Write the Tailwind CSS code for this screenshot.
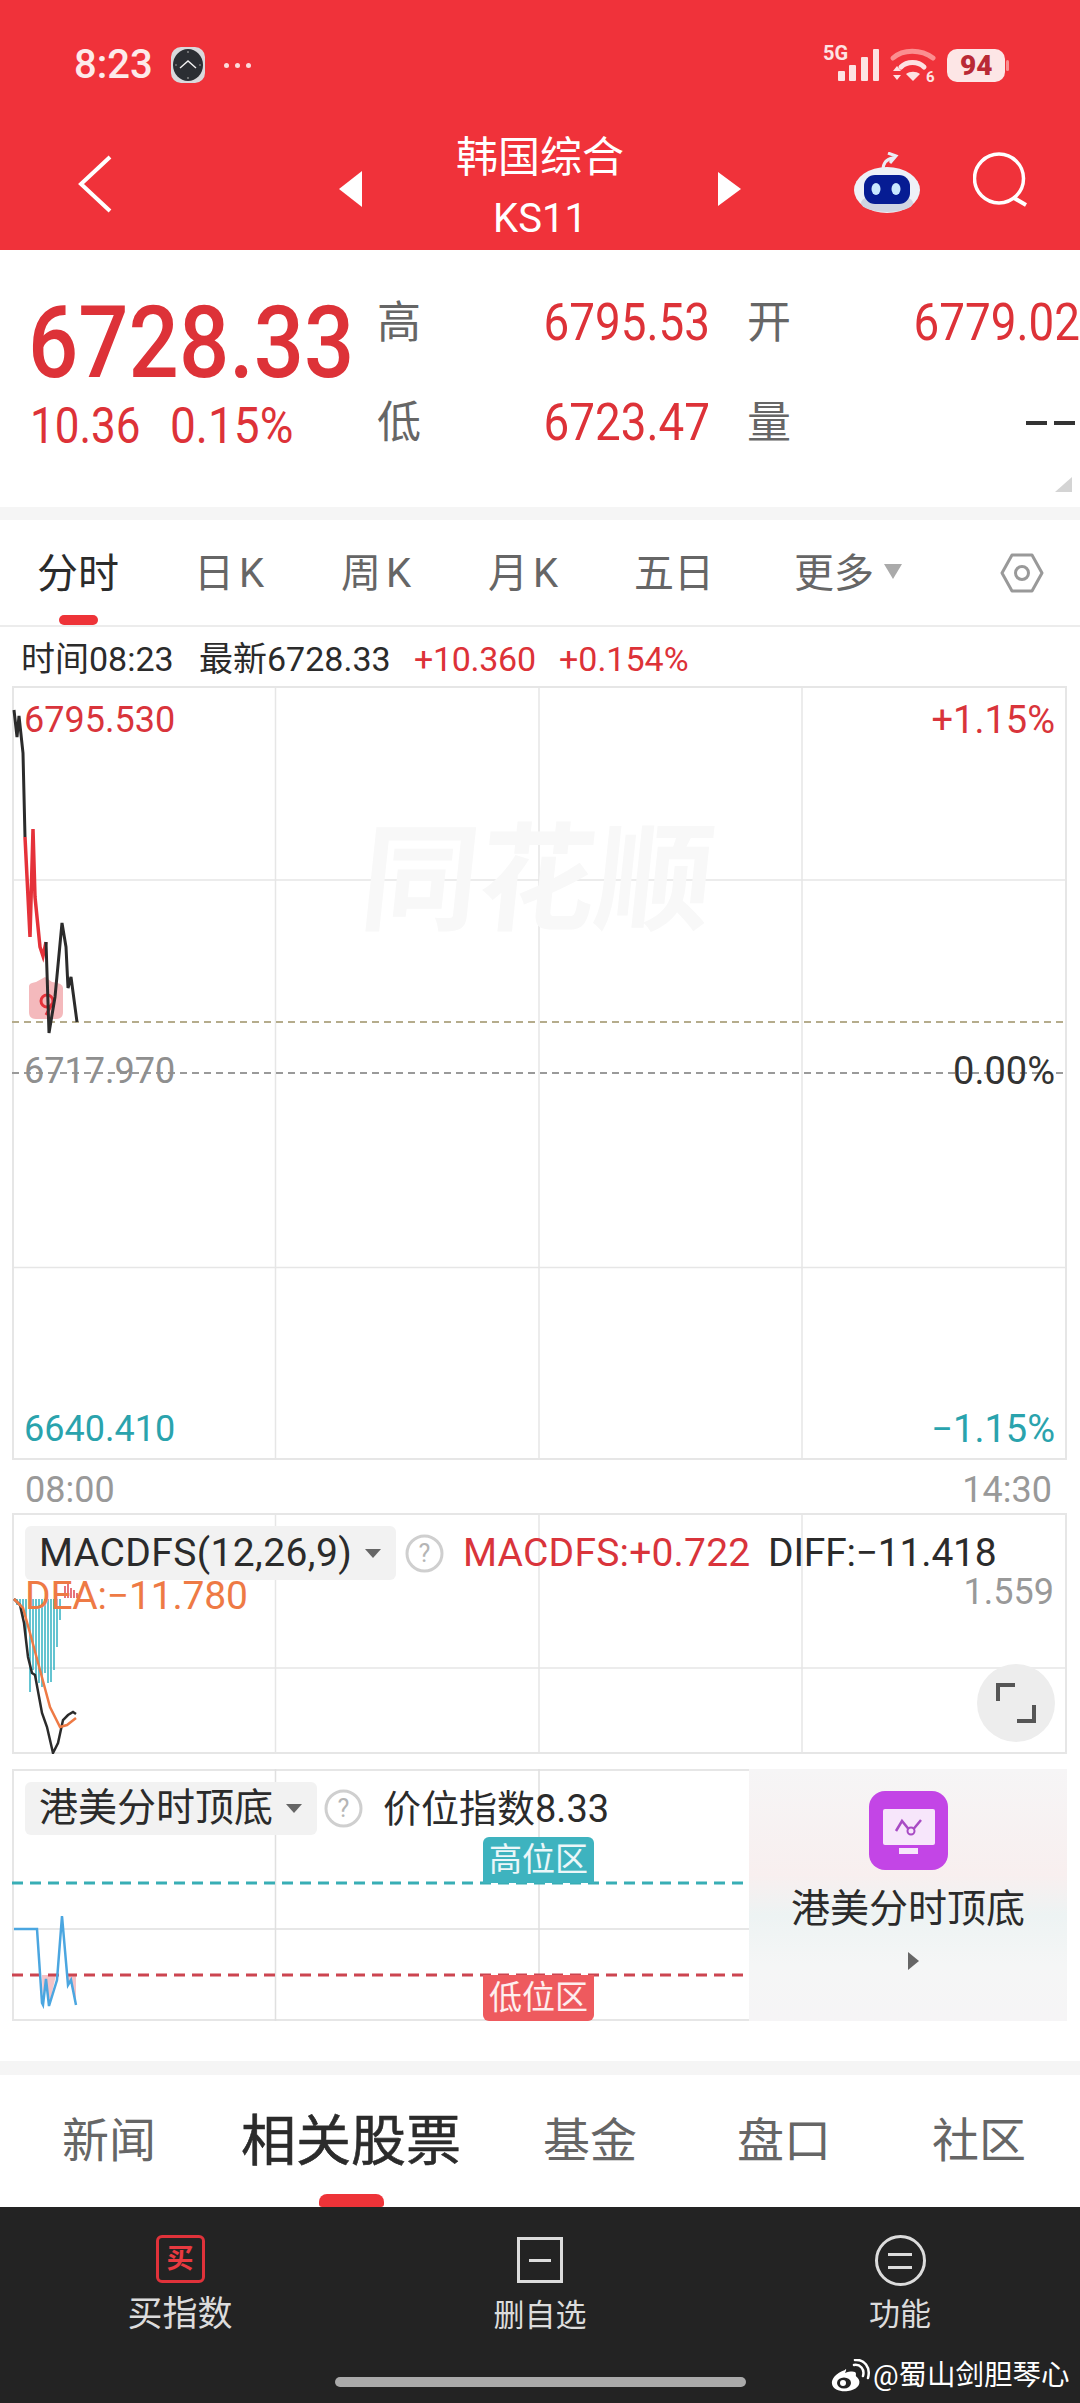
<!DOCTYPE html>
<html lang="zh">
<head>
<meta charset="utf-8">
<script src="https://cdn.jsdelivr.net/npm/@tailwindcss/browser@4"></script>
</head>
<body class="m-0 bg-white">
<div class="w-[1080px] h-[2403px] flex flex-col overflow-hidden bg-white font-['Roboto','Noto_Sans_CJK_SC',sans-serif] text-[#2b2b2b]">

  <!-- header -->
  <header class="h-[250px] shrink-0 bg-[#f0323a] text-white flex flex-col">
    <div class="h-[130px] pt-[40px] pl-[74px] pr-[71px] flex items-start justify-between">
      <div class="flex items-center h-[50px]">
        <span class="text-[40px] leading-none font-medium text-[#fdeaea] w-[97px]">8:23</span>
        <svg class="w-[34px] h-[36px]" viewBox="0 0 34 36">
          <rect x="0" y="0" width="34" height="36" rx="10" fill="#d9d9dc"/>
          <ellipse cx="17" cy="18" rx="15" ry="16" fill="#2b2e33"/>
          <path d="M9 21 L17 14 L25 21" fill="none" stroke="#f2f2f2" stroke-width="1.4"/>
          <path d="M17 4v2M17 30v2M4 18h2M28 18h2" stroke="#9a9a9a" stroke-width="1.2"/>
        </svg>
        <div class="flex gap-[6px] ml-[19px]">
          <span class="w-[5px] h-[5px] rounded-full bg-[#fbdcdc]"></span>
          <span class="w-[5px] h-[5px] rounded-full bg-[#fbdcdc]"></span>
          <span class="w-[5px] h-[5px] rounded-full bg-[#fbdcdc]"></span>
        </div>
      </div>
      <svg class="w-[190px] h-[50px]" viewBox="819 40 190 50">
        <text x="823" y="60" font-family="Roboto" font-weight="700" font-size="20" fill="#fde3e3">5G</text>
        <rect x="838" y="71" width="7" height="10" rx="1" fill="#fde3e3"/>
        <rect x="849" y="65" width="7" height="16" rx="1" fill="#fde3e3"/>
        <rect x="861" y="57" width="7" height="24" rx="1" fill="#fde3e3"/>
        <rect x="873" y="49" width="6" height="32" rx="1" fill="#fde3e3"/>
        <path d="M893 58 C903 49 921 49 933 58" fill="none" stroke="#fb8f90" stroke-width="5" stroke-linecap="round"/>
        <path d="M901 67 C907 61 918 61 924 67" fill="none" stroke="#fde3e3" stroke-width="5" stroke-linecap="round"/>
        <path d="M906 74 C910 71 916 71 920 74 L913 81 Z" fill="#fde3e3"/>
        <path d="M893 71 L897 66 L901 71 Z M893 75 L901 75 L897 80 Z" fill="#fde3e3"/>
        <text x="926" y="82" font-family="Roboto" font-weight="700" font-size="15" fill="#fde3e3">6</text>
        <rect x="947" y="49" width="58" height="33" rx="10" fill="#fde6e6"/>
        <rect x="1006" y="60" width="3" height="11" rx="1.5" fill="#fa8e90"/>
        <text x="960" y="75" font-family="Roboto" font-weight="900" font-size="28" fill="#b92a35">94</text>
      </svg>
    </div>
    <div class="flex-1 grid grid-cols-[1fr_403px_1fr] items-start">
      <div class="pl-[78px] pt-[25px]">
        <svg class="w-[34px] h-[58px]" viewBox="0 0 34 58"><path d="M32 2 L3 29 L32 56" fill="none" stroke="#fff" stroke-width="4"/></svg>
      </div>
      <div class="flex items-center justify-between pt-[3px]">
        <svg class="w-[23px] h-[36px]" viewBox="0 0 23 36"><path d="M23 0 V36 L0 18 Z" fill="#fff"/></svg>
        <div class="flex flex-col items-center">
          <span class="text-[42px] leading-[50px]">韩国综合</span>
          <span class="text-[40px] leading-[50px] mt-[11px]">KS11</span>
        </div>
        <svg class="w-[23px] h-[34px]" viewBox="0 0 23 34"><path d="M0 0 V34 L23 17 Z" fill="#fff"/></svg>
      </div>
      <div class="flex items-start justify-end pr-[52px] pt-[22px] gap-[52px]">
        <svg class="w-[68px] h-[62px]" viewBox="852 154 68 62">
          <path d="M882 172 C882 164 886 161 892 160 M887 155 L895 158 L889 165" fill="none" stroke="#e9edf5" stroke-width="3"/>
          <ellipse cx="886" cy="192" rx="33" ry="23" fill="#eef1f7"/>
          <ellipse cx="886" cy="205" rx="26" ry="9" fill="#cfd5e2"/>
          <rect x="863" y="177" width="46" height="29" rx="11" fill="#061c93"/>
          <ellipse cx="875" cy="191" rx="4.500" ry="6" fill="#c9e8ff"/>
          <ellipse cx="895" cy="191" rx="4.500" ry="6" fill="#c9e8ff"/>
        </svg>
        <svg class="w-[55px] h-[55px]" viewBox="973 158 55 55">
          <circle cx="999" cy="184.500" r="24.500" fill="none" stroke="#fff" stroke-width="3.500"/>
          <path d="M1014 204 L1026 211" stroke="#fff" stroke-width="4"/>
        </svg>
      </div>
    </div>
  </header>

  <!-- quote -->
  <section class="h-[257px] shrink-0 flex relative">
    <div class="w-[377px] pl-[28px] text-[#dd3238]">
      <div class="h-[120px] mt-[43px] text-[100px] leading-[100px] font-medium whitespace-nowrap origin-left scale-x-[.885]">6728.33</div>
      <div class="flex text-[50px] leading-[50px] mt-[-12px] pl-[2px]">
        <span class="w-[140px] origin-left scale-x-[.88]">10.36</span>
        <span class="origin-left scale-x-[.92]">0.15%</span>
      </div>
    </div>
    <div class="grid grid-cols-[44px_289px_37px_44px_289px] grid-rows-[100px_100px] pt-[23px] items-center text-[52px] text-[#dd3238] leading-none whitespace-nowrap">
      <span class="text-[44px] text-[#666]">高</span>
      <span class="text-right origin-right scale-x-[.88]">6795.53</span>
      <span></span>
      <span class="text-[44px] text-[#666]">开</span>
      <span class="text-right origin-right scale-x-[.88]">6779.02</span>
      <span class="text-[44px] text-[#666]">低</span>
      <span class="text-right origin-right scale-x-[.88]">6723.47</span>
      <span></span>
      <span class="text-[44px] text-[#666]">量</span>
      <span class="flex justify-end gap-[7px] pr-[5px]"><i class="w-[21px] h-[4px] bg-[#333]"></i><i class="w-[21px] h-[4px] bg-[#333]"></i></span>
    </div>
    <svg class="absolute right-[8px] bottom-[15px] w-[17px] h-[15px]" viewBox="0 0 17 15"><path d="M17 0 V15 H0 Z" fill="#d4d4d4"/></svg>
  </section>
  <div class="h-[13px] shrink-0 bg-[#f5f5f5]"></div>

  <!-- period tabs -->
  <nav class="h-[107px] shrink-0 border-b-2 border-[#ececec] relative flex items-start pt-[32px] pl-[37px] text-[40px] leading-[44px] text-[#666] whitespace-nowrap">
    <span class="text-[41px] text-[#2b2b2b] w-[157px]">分时</span>
    <span class="w-[147px] tracking-[5px]">日K</span>
    <span class="w-[147px] tracking-[5px]">周K</span>
    <span class="w-[146px] tracking-[5px]">月K</span>
    <span class="w-[160px]">五日</span>
    <span class="w-[90px]">更多</span>
    <svg class="w-[18px] h-[15px] mt-[12px]" viewBox="0 0 18 15"><path d="M0 0 H18 L9 15 Z" fill="#aaa"/></svg>
    <svg class="w-[44px] h-[40px] ml-[98px] mt-[1px]" viewBox="0 0 44 40"><path d="M12 2 H32 L42 20 L32 38 H12 L2 20 Z" fill="none" stroke="#999" stroke-width="3" stroke-linejoin="round"/><circle cx="22" cy="20" r="6.500" fill="none" stroke="#999" stroke-width="3"/></svg>
    <span class="absolute left-[59px] bottom-0 w-[39px] h-[10px] rounded-full bg-[#ee3338]"></span>
  </nav>

  <!-- crosshair row -->
  <div class="h-[59px] shrink-0 flex items-center pl-[21px] pt-[4px] text-[34px] leading-none whitespace-nowrap text-[#2b2b2b]">
    <span class="w-[178px]">时间08:23</span>
    <span class="w-[215px]">最新6728.33</span>
    <span class="w-[145px] tracking-[-.3px] text-[#dd3238]">+10.360</span>
    <span class="text-[#dd3238]">+0.154%</span>
  </div>

  <!-- main chart -->
  <section class="h-[774px] shrink-0 relative">
    <svg class="absolute inset-0 w-[1080px] h-[774px]" viewBox="0 686 1080 774" fill="none">
      <rect x="13" y="687" width="1053" height="772" stroke="#e6e6e6" stroke-width="2"/>
      <path d="M275.500 686V1460M539 686V1460M802 686V1460M12 880H1067M12 1267.500H1067" stroke="#e6e6e6" stroke-width="1.500"/>
      <path d="M12 1022H1067" stroke="#b5ac8c" stroke-width="2" stroke-dasharray="7 5"/>
      <path d="M12 1073H1067" stroke="#9a9a9a" stroke-width="2" stroke-dasharray="7 5"/>
      <path d="M29 986 Q29 983 36 982 L45 977 L52 982 Q63 983 63 988 V1012 Q63 1019 56 1019 H36 Q29 1019 29 1012 Z" fill="#f4b9bc"/>
      <circle cx="47" cy="1001" r="6" stroke="#e5323a" stroke-width="3"/>
      <path d="M52 1004 L46 1015" stroke="#e5323a" stroke-width="3"/>
      <path d="M14 710 L17 737 L19 716 L23 753 L25 837" stroke="#2b2b2b" stroke-width="3"/>
      <path d="M25 837 L30 937 L33 829 L35 897 L40 947 L43 956 L46 942" stroke="#e5323a" stroke-width="3.500"/>
      <path d="M46 942 L49 1033 L55 997 L62 923 L66 947 L68 988 L71 977 L77 1022" stroke="#2b2b2b" stroke-width="3"/>
    </svg>
    <div class="absolute left-[362px] top-[140px] text-[117px] leading-[110px] font-bold text-[#f8f8f8] -skew-x-6 whitespace-nowrap">同花顺</div>
    <span class="absolute left-[24px] top-[16px] text-[36px] leading-[36px] text-[#d9343b]">6795.530</span>
    <span class="absolute right-[25px] top-[16px] text-[38px] leading-[36px] text-[#d9343b]">+1.15%</span>
    <span class="absolute left-[24px] top-[367px] text-[36px] leading-[36px] text-[#8f8f8f]">6717.970</span>
    <span class="absolute right-[25px] top-[367px] text-[38px] leading-[36px] text-[#333]">0.00%</span>
    <span class="absolute left-[24px] top-[725px] text-[36px] leading-[36px] text-[#2aa3ad]">6640.410</span>
    <span class="absolute right-[25px] top-[725px] text-[38px] leading-[36px] text-[#2aa3ad]">−1.15%</span>
  </section>

  <!-- axis -->
  <div class="h-[53px] shrink-0 flex justify-between items-center pl-[25px] pr-[28px] pt-[6px] text-[36px] leading-none text-[#999]">
    <span>08:00</span><span>14:30</span>
  </div>

  <!-- MACD -->
  <section class="h-[241px] shrink-0 relative">
    <svg class="absolute inset-0 w-[1080px] h-[241px]" viewBox="0 1513 1080 241" fill="none">
      <rect x="13" y="1514" width="1053" height="239" stroke="#e6e6e6" stroke-width="2"/>
      <path d="M275.500 1513V1754M539 1513V1754M802 1513V1754M12 1668H1067" stroke="#e6e6e6" stroke-width="1.500"/>
      <path d="M17 1599V1605M20 1599V1605M23 1599V1620M26 1599V1640M30 1599V1692M33 1599V1670M36 1599V1680M39 1599V1683M42 1599V1687M45 1599V1673M48 1599V1683M51 1599V1682M54 1599V1670M57 1599V1647M60 1599V1620" stroke="#3fb6c6" stroke-width="1.600"/>
      <path d="M65 1598V1586M68 1598V1584M71 1598V1588M74 1598V1590M77 1598V1593" stroke="#e0505a" stroke-width="1.600"/>
      <path d="M14 1599 L20 1605 L24 1623 L28 1657 L32 1673 L35 1675 L42 1713 L47 1727 L53 1753 L58 1743 L63 1720 L68 1715 L73 1712 L76 1714" stroke="#2b2b2b" stroke-width="2.500"/>
      <path d="M14 1599 L23 1608 L30 1633 L40 1670 L50 1707 L60 1727 L67 1725 L76 1718" stroke="#ee7a45" stroke-width="2.500"/>
    </svg>
    <div class="absolute left-[25px] top-[13px] flex items-center whitespace-nowrap text-[39px] leading-none">
      <div class="w-[371px] h-[54px] rounded-[6px] bg-[#f2f2f2] flex items-center pl-[14px]">
        <span class="w-[326px] tracking-[.4px]">MACDFS(12,26,9)</span>
        <svg class="w-[16px] h-[9px]" viewBox="0 0 16 9"><path d="M0 0 H16 L8 9 Z" fill="#666"/></svg>
      </div>
      <svg class="w-[39px] h-[39px] ml-[9px]" viewBox="0 0 39 39"><circle cx="19.500" cy="19.500" r="17.500" fill="none" stroke="#cfcfcf" stroke-width="3"/><text x="19.500" y="28" text-anchor="middle" font-size="25" font-family="Roboto" fill="#b5b5b5">?</text></svg>
      <span class="ml-[19px] w-[305px] tracking-[.2px] text-[#d9343b]">MACDFS:+0.722</span>
      <span class="tracking-[-.2px]">DIFF:−11.418</span>
    </div>
    <span class="absolute left-[25px] top-[64px] text-[39px] tracking-[-.2px] leading-none text-[#ee7a45]">DEA:−11.780</span>
    <span class="absolute right-[26px] top-[61px] text-[36px] leading-none text-[#999]">1.559</span>
    <div class="absolute left-[977px] top-[151px] w-[78px] h-[78px] rounded-full bg-[#ededed] flex items-center justify-center">
      <svg class="w-[40px] h-[40px]" viewBox="0 0 40 40" fill="none"><path d="M2 18 V2 H19 M38 22 V38 H21" stroke="#555" stroke-width="4"/></svg>
    </div>
  </section>
  <div class="h-[15px] shrink-0"></div>

  <!-- timing panel -->
  <section class="h-[252px] shrink-0 relative">
    <svg class="absolute inset-0 w-[1080px] h-[252px]" viewBox="0 1769 1080 252" fill="none">
      <path d="M13 1769V2021M12 1770H749M12 2020H749" stroke="#e6e6e6" stroke-width="2"/>
      <path d="M275.500 1769V2021M539 1769V2021M12 1929H749" stroke="#e0e0e0" stroke-width="1.500"/>
      <path d="M12 1883H749" stroke="#38aeb5" stroke-width="3" stroke-dasharray="11 7"/>
      <path d="M42 1975 L43 2005 L46 1979 L49 2006 L56 1975 Z M66 1975 L68 1985 L71 1980 L76 2005 V1975 Z" fill="#f4c3c7"/>
      <path d="M12 1975H749" stroke="#cc4550" stroke-width="3" stroke-dasharray="11 7"/>
      <path d="M14 1929 L37 1929 L42 2003 L43 2005 L46 1979 L49 2006 L57 1980 L62 1916 L68 1985 L71 1980 L76 2005" stroke="#4ba6e0" stroke-width="2.500"/>
    </svg>
    <div class="absolute left-[25px] top-[13px] flex items-center whitespace-nowrap">
      <div class="w-[292px] h-[53px] rounded-[6px] bg-[#f2f2f2] flex items-center pl-[14px] text-[39px] leading-none">
        <span class="w-[247px]">港美分时顶底</span>
        <svg class="w-[16px] h-[9px]" viewBox="0 0 16 9"><path d="M0 0 H16 L8 9 Z" fill="#666"/></svg>
      </div>
      <svg class="w-[39px] h-[39px] ml-[7px]" viewBox="0 0 39 39"><circle cx="19.500" cy="19.500" r="17.500" fill="none" stroke="#cfcfcf" stroke-width="3"/><text x="19.500" y="28" text-anchor="middle" font-size="25" font-family="Roboto" fill="#b5b5b5">?</text></svg>
      <span class="ml-[20px] text-[38px] leading-none">价位指数8.33</span>
    </div>
    <div class="absolute left-[483px] top-[68px] w-[111px] h-[46px] rounded-t-[6px] bg-[#3eb3bf] text-white/90 text-[33px] leading-[46px] text-center">高位区</div>
    <div class="absolute left-[483px] top-[206px] w-[111px] h-[46px] rounded-b-[6px] bg-[#ee5a5e] text-white/90 text-[33px] leading-[46px] text-center">低位区</div>
    <div class="absolute left-[749px] top-0 w-[318px] h-[252px] flex flex-col items-center bg-[linear-gradient(180deg,#f6f5f6_0%,#f8efef_42%,#edf3f3_58%,#f5f6f6_78%,#f6f5f6_100%)]">
      <svg class="w-[79px] h-[79px] mt-[22px] shrink-0" viewBox="0 0 79 79">
        <rect width="79" height="79" rx="16" fill="#c345e6"/>
        <rect x="14" y="18" width="52" height="36" rx="2" fill="#f7e6fb"/>
        <rect x="30" y="57" width="19" height="6" fill="#f7e6fb"/>
        <path d="M27 40 L33 30 L42 41 L52 29" fill="none" stroke="#a84bc4" stroke-width="2.500"/>
        <circle cx="42" cy="40" r="3.500" fill="#f7e6fb" stroke="#a84bc4" stroke-width="2"/>
      </svg>
      <span class="text-[39px] leading-[44px] mt-[17px]">港美分时顶底</span>
      <svg class="w-[11px] h-[18px] mt-[21px] ml-[10px]" viewBox="0 0 11 18"><path d="M0 0 L11 9 L0 18 Z" fill="#666"/></svg>
    </div>
  </section>
  <div class="h-[40px] shrink-0"></div>
  <div class="h-[14px] shrink-0 bg-[#f5f5f5]"></div>

  <!-- info tabs -->
  <nav class="h-[132px] shrink-0 relative flex items-start pt-[36px] pl-[62px] text-[47px] leading-[60px] text-[#666] whitespace-nowrap">
    <span class="w-[179px]">新闻</span>
    <span class="w-[302px] text-[55px] text-[#2b2b2b] [-webkit-text-stroke:0.6px_#2b2b2b]">相关股票</span>
    <span class="w-[194px]">基金</span>
    <span class="w-[195px]">盘口</span>
    <span>社区</span>
    <span class="absolute left-[319px] bottom-0 w-[65px] h-[13px] rounded-t-[8px] rounded-b-[3px] bg-[#ee3338]"></span>
  </nav>

  <!-- bottom bar -->
  <footer class="h-[196px] shrink-0 bg-[#232323] relative">
    <div class="grid grid-cols-3 pt-[28px] text-[#dcdcdc]">
      <div class="flex flex-col items-center">
        <div class="w-[49px] h-[48px] rounded-[6px] border-[3px] border-[#e0323a] flex items-center justify-center text-[27px] font-bold leading-none text-[#e93a40]">买</div>
        <span class="text-[35px] leading-[40px] mt-[12px] text-[#dcdcdc]">买指数</span>
      </div>
      <div class="flex flex-col items-center">
        <div class="w-[46px] h-[46px] mt-[2px] border-[3px] border-[#dcdcdc] flex items-center justify-center"><i class="w-[22px] h-[3px] bg-[#dcdcdc]"></i></div>
        <span class="text-[31px] leading-[36px] mt-[15px]">删自选</span>
      </div>
      <div class="flex flex-col items-center">
        <div class="w-[51px] h-[51px] rounded-full border-[3px] border-[#dcdcdc] flex flex-col items-center justify-center gap-[10px]"><i class="w-[24px] h-[3px] bg-[#dcdcdc]"></i><i class="w-[24px] h-[3px] bg-[#dcdcdc]"></i></div>
        <span class="text-[31px] leading-[36px] mt-[11px]">功能</span>
      </div>
    </div>
    <div class="absolute left-[335px] top-[170px] w-[411px] h-[10px] rounded-full bg-[#aaaaaa]"></div>
    <div class="absolute left-[830px] top-[152px] flex items-center text-[28.5px] leading-none text-white whitespace-nowrap">
      <svg class="w-[40px] h-[34px]" viewBox="0 0 40 34" fill="none">
        <path d="M15 11 C6 14 1 20 2 25 C3 31 11 33 18 32 C26 31 31 26 29 21 C28 18 25 18 26 15 C26 12 21 12 15 14 C17 10 16 9 15 11 Z" fill="#fff"/>
        <ellipse cx="14" cy="24" rx="7" ry="5.500" fill="#232323"/>
        <circle cx="13" cy="24" r="3" fill="#fff"/>
        <path d="M24 6 C30 5 35 10 33 17 M25 1 C34 0 41 8 38 19" stroke="#fff" stroke-width="2.500" stroke-linecap="round"/>
      </svg>
      <span class="ml-[3px]">@蜀山剑胆琴心</span>
    </div>
  </footer>
</div>
</body>
</html>
